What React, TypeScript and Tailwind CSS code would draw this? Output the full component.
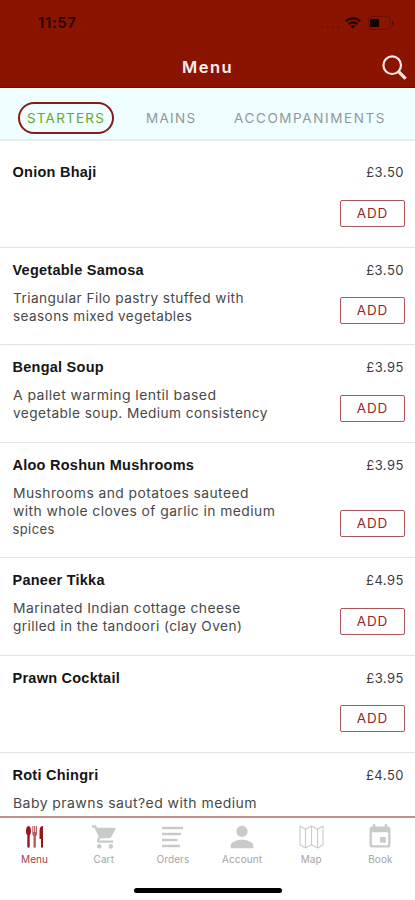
import type { ReactNode } from "react";
import { MdShoppingCart, MdPerson, MdEvent } from "react-icons/md";

type Line = { text: string; cls: string };
type Item = { name: string; price: string; lines: Line[]; height: string; canAdd: boolean };

const items: Item[] = [
  { name: "Onion Bhaji", price: "£3.50", lines: [], height: "h-[97.5px]", canAdd: true },
  {
    name: "Vegetable Samosa", price: "£3.50", height: "h-[97.5px]", canAdd: true,
    lines: [
      { text: "Triangular Filo pastry stuffed with", cls: "scale-x-[1.05]" },
      { text: "seasons mixed vegetables", cls: "scale-x-[1.042]" },
    ],
  },
  {
    name: "Bengal Soup", price: "£3.95", height: "h-[97.5px]", canAdd: true,
    lines: [
      { text: "A pallet warming lentil based", cls: "scale-x-[1.078]" },
      { text: "vegetable soup. Medium consistency", cls: "scale-x-[1.052]" },
    ],
  },
  {
    name: "Aloo Roshun Mushrooms", price: "£3.95", height: "h-[115.5px]", canAdd: true,
    lines: [
      { text: "Mushrooms and potatoes sauteed", cls: "scale-x-[1.066]" },
      { text: "with whole cloves of garlic in medium", cls: "scale-x-[1.068]" },
      { text: "spices", cls: "scale-x-[1]" },
    ],
  },
  {
    name: "Paneer Tikka", price: "£4.95", height: "h-[97.5px]", canAdd: true,
    lines: [
      { text: "Marinated Indian cottage cheese", cls: "scale-x-[1.066]" },
      { text: "grilled in the tandoori (clay Oven)", cls: "scale-x-[1.05]" },
    ],
  },
  { name: "Prawn Cocktail", price: "£3.95", lines: [], height: "h-[97.5px]", canAdd: true },
  {
    name: "Roti Chingri", price: "£4.50", height: "h-[97.5px]", canAdd: false,
    lines: [{ text: "Baby prawns saut?ed with medium", cls: "scale-x-[1.078]" }],
  },
];

export default function App() {
  return (
    <div className="flex h-[900px] w-[415px] flex-col overflow-hidden bg-white font-['Inter',sans-serif]">
      <header className="h-[88px] shrink-0 border-b border-[#7a0808] bg-[#8b1400]">
        <StatusBar />
        <div className="grid h-[42px] grid-cols-[1fr_auto_1fr] items-center px-2">
          <span />
          <h1 className="text-[16.5px] font-semibold tracking-[1.5px] text-[#fbeeee]">Menu</h1>
          <button aria-label="Search" className="justify-self-end pt-px"><SearchIcon /></button>
        </div>
      </header>

      <nav className="flex h-[53px] shrink-0 items-center border-b-2 border-[#e9eeee] bg-[#effeff] pt-[9px] pl-[18px] text-[13.5px] text-[#929999]">
        <button className="flex h-8 w-24 items-center justify-center rounded-full border-2 border-[#8c1919] tracking-[1.2px] text-[#6ca52c]">STARTERS</button>
        <button className="ml-8 w-[53px] text-left tracking-[1.3px]">MAINS</button>
        <button className="ml-[35px] tracking-[1.6px]">ACCOMPANIMENTS</button>
      </nav>

      <main className="min-h-0 flex-1 overflow-hidden pt-[9px]">
        {items.map((item) => <MenuRow key={item.name} item={item} />)}
      </main>

      <footer className="flex h-[84px] shrink-0 flex-col items-center border-t-2 border-[#c48f8c] bg-white">
        <div className="grid h-[69.5px] w-full shrink-0 grid-cols-6 pt-[5px]">
          <Tab label="Menu" active><CutleryIcon /></Tab>
          <Tab label="Cart"><MdShoppingCart size={28} className="ml-[2px] shrink-0" /></Tab>
          <Tab label="Orders"><OrdersIcon /></Tab>
          <Tab label="Account"><MdPerson size={34} className="shrink-0" /></Tab>
          <Tab label="Map"><MapIcon /></Tab>
          <Tab label="Book"><MdEvent size={28} className="mt-px shrink-0" /></Tab>
        </div>
        <div className="h-[5px] w-[148px] shrink-0 rounded-full bg-black" />
      </footer>
    </div>
  );
}

function MenuRow({ item }: { item: Item }) {
  return (
    <div className={`flex justify-between border-b border-[#e2e2e2] pr-[10px] pl-[12.5px] ${item.height}`}>
      <div className="pt-3">
        <h2 className="font-['Liberation_Sans',sans-serif] text-[14.5px] leading-5 font-bold tracking-[0.25px] whitespace-nowrap text-[#151515]">{item.name}</h2>
        <div className="mt-[9px] text-[13px] leading-[18px] tracking-[0.4px] text-[#484848]">
          {item.lines.map((l) => <p key={l.text} className={`origin-left whitespace-nowrap ${l.cls}`}>{l.text}</p>)}
        </div>
      </div>
      <div className="flex flex-col items-end justify-between pt-3 pb-5">
        <span className="pr-px text-[13px] leading-5 tracking-[0.5px] text-[#3c3c3c]">{item.price}</span>
        {item.canAdd && (
          <button className="h-[27px] w-[65px] rounded-[2px] border border-[#a9575a] text-[13.5px] leading-[25px] tracking-[0.9px] text-[#96282b]">ADD</button>
        )}
      </div>
    </div>
  );
}

function Tab({ label, active, children }: { label: string; active?: boolean; children: ReactNode }) {
  return (
    <button className={`flex flex-col items-center ${active ? "text-[#97181a]" : "text-[#c9cbcb]"}`}>
      <span className="flex h-[27px] items-center justify-center">{children}</span>
      <span className={`mt-[2px] text-[10px] leading-[14px] tracking-[0.1px] ${active ? "text-[#a34348]" : "text-[#a5a5a5]"}`}>{label}</span>
    </button>
  );
}

function StatusBar() {
  return (
    <div className="flex h-[46px] items-center justify-between pr-[20px] pl-[38px] text-[#280400]">
      <span className="text-[15px] font-semibold tracking-[0.6px]">11:57</span>
      <div className="flex items-center">
        <svg width="20" height="14" viewBox="0 0 20 14" fill="currentColor" opacity=".35">
          <circle cx="2" cy="11" r="1" /><circle cx="7.5" cy="11" r="1" /><circle cx="13" cy="11" r="1" /><circle cx="18.5" cy="11" r="1" />
        </svg>
        <svg className="ml-[5px]" width="16" height="12" viewBox="0 0 16 12" fill="none" stroke="currentColor" strokeWidth="2.1">
          <path d="M.8 4.4a10.2 10.2 0 0 1 14.4 0M3.6 7.2a6.2 6.2 0 0 1 8.8 0" />
          <path d="M5.6 9.2a3.5 3.5 0 0 1 4.8 0L8 11.7Z" fill="currentColor" stroke="none" />
        </svg>
        <svg className="ml-[7px]" width="27" height="14" viewBox="0 0 27 14">
          <rect x=".5" y=".5" width="22" height="13" rx="3.5" fill="none" stroke="currentColor" opacity=".35" />
          <rect x="2" y="3" width="9" height="8" rx="1" fill="#140200" />
          <path d="M24 4.5v5q2-1 2-2.5t-2-2.5Z" fill="currentColor" opacity=".5" />
        </svg>
      </div>
    </div>
  );
}

function SearchIcon() {
  return (
    <svg width="25" height="25" viewBox="0 0 25 25" fill="none" stroke="#f9e8e8">
      <circle cx="10.2" cy="10.2" r="8.8" strokeWidth="2.2" />
      <path d="m16.8 16.8 6.8 6.8" strokeWidth="3.2" />
    </svg>
  );
}

function CutleryIcon() {
  return (
    <svg width="19" height="24" viewBox="0 0 19 24" fill="currentColor">
      <path d="M3.5 1C5.2 1 6 3.5 6 6c0 2.2-.6 3.6-1.3 4.2v11.3q0 1.3-1.2 1.3t-1.2-1.3V10.2C1.6 9.6 1 8.2 1 6c0-2.5.8-5 2.5-5Z" />
      <path d="M7.3 1h1.1v6h.7V1h1.2v6h.7V1h1.1v8q0 1.600-1.200 2V22q0 .8-1.200.8T8.500 22V11q-1.200-.4-1.200-2Z" opacity=".7" />
      <path d="M18 1v20.8q0 1-1 1t-1-1V14h-1.500V6Q14.500 1 18 1Z" />
    </svg>
  );
}

function OrdersIcon() {
  return (
    <svg width="21" height="22" viewBox="0 0 21 22" stroke="currentColor" strokeWidth="2.3">
      <path d="M0 2h21M0 8h19M0 14h15.5M0 20h18" />
    </svg>
  );
}

function MapIcon() {
  return (
    <svg width="25" height="24" viewBox="0 0 25 24" fill="none" stroke="currentColor" strokeWidth="1.1" strokeLinejoin="round">
      <path d="m1 1 5.5 3.3L12.500 1l6 3.300L24 1v18.700L18.500 23l-6-3.300-6 3.300L1 19.700ZM6.500 4.300V23M12.500 1v18.700M18.500 4.300V23" />
    </svg>
  );
}
